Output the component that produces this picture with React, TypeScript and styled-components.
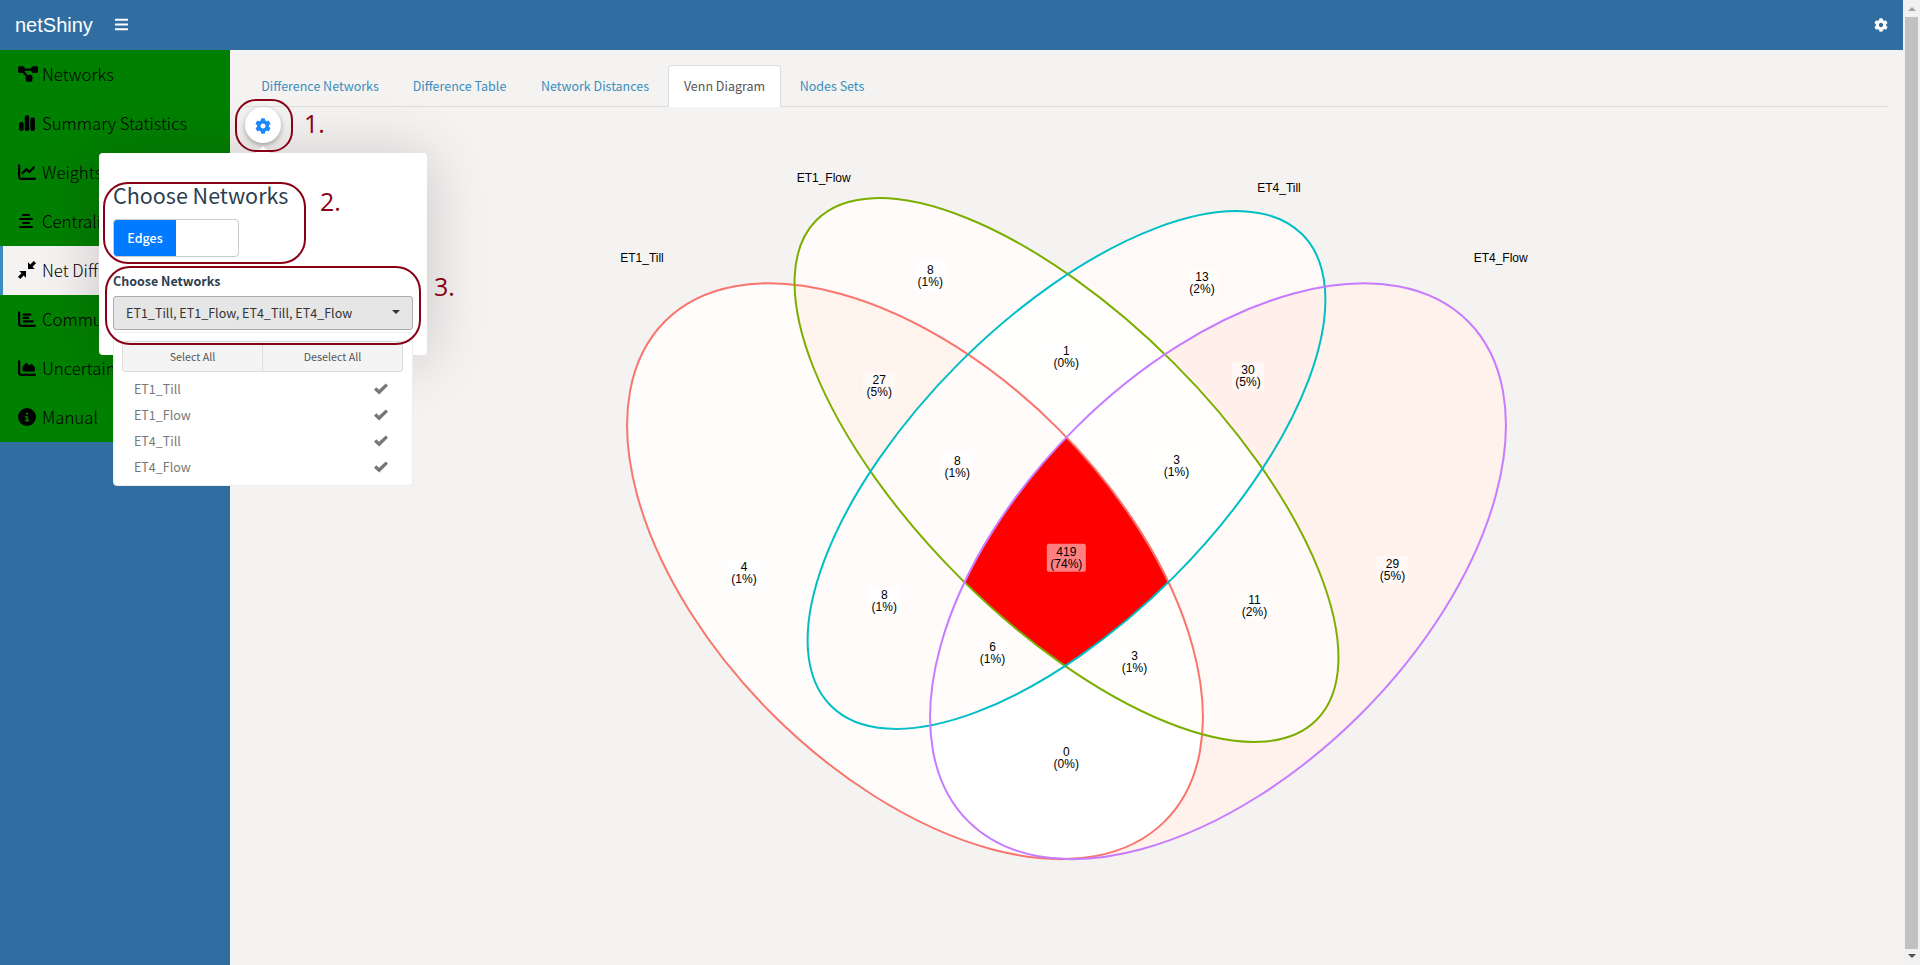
import React from 'react';
import styled, { createGlobalStyle } from 'styled-components';
import { FaBars, FaCog } from 'react-icons/fa';
import { FaChartSimple, FaChartLine, FaAlignCenter, FaChartBar, FaChartArea, FaCircleInfo, FaDiagramProject } from 'react-icons/fa6';

const SANS = '"Noto Sans CJK SC", "Noto Sans", sans-serif';

const GlobalStyle = createGlobalStyle`
  * { box-sizing: border-box; }
  html, body { margin: 0; height: 100%; overflow: hidden; }
  body { font-family: ${SANS}; font-size: 12.5px; color: #333; background: #f4f3f1; }
  ul, h3 { margin: 0; padding: 0; list-style: none; font-weight: normal; }
`;

const Window = styled.div`
  display: flex;
  width: 1920px;
  height: 965px;
  overflow: hidden;
`;
const Page = styled.div`
  position: relative;
  display: flex;
  flex-direction: column;
  width: 1903px;
`;
const Header = styled.header`
  display: flex;
  align-items: center;
  height: 50px;
  padding: 0 15px;
  background: #306ea1;
  color: #fff;
`;
const Brand = styled.span`
  width: 98.5px;
  font: 20px/50px "Liberation Sans", Arial, sans-serif;
`;
const MenuToggle = styled(FaBars)`
  margin-bottom: 1px;
  font-size: 15px;
`;
const SettingsIcon = styled(FaCog)`
  margin-left: auto;
  font-size: 14px;
`;
const Body = styled.div`
  display: flex;
  flex: 1;
`;
const Sidebar = styled.nav`
  width: 230px;
  background: #306ea1;
`;
const SideItem = styled.li<{ $active?: boolean }>`
  display: flex;
  align-items: center;
  height: 49px;
  padding: 0 0 2px 15px;
  border-left: 3px solid ${p => (p.$active ? '#3c8dbc' : 'green')};
  background: ${p => (p.$active ? '#f4f3f1' : 'green')};
  color: #000;
  font-size: 16.8px;
  font-weight: 300;
  white-space: nowrap;
`;
const IconSlot = styled.span`
  display: flex;
  width: 24px;
  font-size: 18px;
`;

const Content = styled.main`
  flex: 1;
  padding: 15px;
`;
const Tabs = styled.ul`
  display: flex;
  gap: 2px;
  height: 42px;
  border-bottom: 1px solid #ddd;
`;
const Tab = styled.li<{ $w: number; $active?: boolean }>`
  display: flex;
  align-items: center;
  justify-content: center;
  width: ${p => p.$w}px;
  height: 42px;
  padding-bottom: 2px;
  border: 1px solid ${p => (p.$active ? '#ddd' : 'transparent')};
  border-bottom: 0;
  border-radius: 4px 4px 0 0;
  background: ${p => (p.$active ? '#fff' : 'transparent')};
  color: ${p => (p.$active ? '#555' : '#3c8dbc')};
  white-space: nowrap;
`;
const Plot = styled.svg`
  display: block;
  width: 1642px;
  height: 790px;
  font-family: "Liberation Sans", Arial, sans-serif;
  font-size: 12px;
`;

const Scrollbar = styled.div`
  display: flex;
  flex-direction: column;
  justify-content: space-between;
  align-items: center;
  width: 17px;
  padding: 7px 0;
  background: #f1f1f1;
`;
const Thumb = styled.div`
  width: 13px;
  height: 932px;
  background: #c1c1c1;
`;
const ScrollArrow = styled.div<{ $down?: boolean }>`
  border: 4px solid transparent;
  border-top: ${p => (p.$down ? '4px solid #505050' : '0')};
  border-bottom: ${p => (p.$down ? '0' : '4px solid #a3a3a3')};
`;

const GearButton = styled.button`
  position: absolute;
  left: 245px;
  top: 107px;
  display: flex;
  align-items: center;
  justify-content: center;
  width: 36px;
  height: 36px;
  padding: 2px 0 0;
  border: 0;
  border-radius: 50%;
  background: #fff;
  box-shadow: 0 2px 5px rgba(0, 0, 0, 0.3);
  color: #1d89ff;
  font-size: 16px;
`;
const Popup = styled.section`
  position: absolute;
  left: 99px;
  top: 153px;
  width: 328px;
  height: 202px;
  padding: 26px 14px 0;
  border-radius: 4px;
  background: #fff;
  box-shadow: 0 4px 60px rgba(40, 0, 30, 0.2);
  color: #2c3e50;
`;
const PopupPointer = styled.div`
  position: absolute;
  left: 157px;
  top: -7px;
  border: 7px solid transparent;
  border-top: 0;
  border-bottom-color: #fff;
`;
const PopupTitle = styled.h3`
  height: 40px;
  font-size: 21.5px;
  line-height: 32px;
  white-space: nowrap;
`;
const Switch = styled.div`
  display: flex;
  width: 126px;
  height: 38px;
  border: 1px solid #ccc;
  border-radius: 4px;
  overflow: hidden;
`;
const SwitchOn = styled.span`
  width: 62px;
  background: #007bff;
  color: #fff;
  font-weight: 500;
  line-height: 35px;
  text-align: center;
`;
const FieldLabel = styled.label`
  display: block;
  height: 39px;
  padding-top: 14px;
  line-height: 20px;
  font-weight: 700;
`;
const Picker = styled.button`
  display: flex;
  align-items: center;
  justify-content: space-between;
  width: 300px;
  height: 34px;
  padding: 0 12px 2px;
  border: 1px solid #adadad;
  border-radius: 3px;
  background: #e6e6e6;
  color: #333;
  font: 12.55px ${SANS};
`;
const Caret = styled.span`
  border: 4px solid transparent;
  border-top-color: #333;
  border-bottom: 0;
`;
const Options = styled.div`
  position: absolute;
  left: 14px;
  top: 179px;
  width: 300px;
  height: 154px;
  padding: 8px 9px 0 8px;
  border: 1px solid #eee;
  border-radius: 4px;
  background: #fff;
  color: #777;
`;
const ActionGroup = styled.div`
  display: flex;
  height: 31px;
  margin-bottom: 4px;
  border: 1px solid #ddd;
  border-radius: 3px;
  background: #f4f4f4;
`;
const Action = styled.span`
  flex: 1;
  color: #555;
  font-size: 10.7px;
  line-height: 30px;
  text-align: center;
  & + & { border-left: 1px solid #ddd; }
`;
const Option = styled.div`
  display: flex;
  align-items: center;
  justify-content: space-between;
  height: 26px;
  padding: 0 15px 1px 12px;
`;

const Callout = styled.div<{ $x: number; $y: number; $w: number; $h: number; $r: number }>`
  position: absolute;
  left: ${p => p.$x}px;
  top: ${p => p.$y}px;
  width: ${p => p.$w}px;
  height: ${p => p.$h}px;
  border: 2px solid #880015;
  border-radius: ${p => p.$r}px;
`;
const Step = styled.span<{ $x: number; $y: number }>`
  position: absolute;
  left: ${p => p.$x}px;
  top: ${p => p.$y}px;
  color: #880015;
  font: 25px/30px "Open Sans", sans-serif;
`;

const CompressIcon = () => (
  <svg width="18" height="18" viewBox="0 0 18 18" fill="currentColor">
    <path d="M10 1.2V8h6.8l-2.3-2.3L18 2.3 15.7 0l-3.4 3.5zM1.2 10H8v6.8l-2.3-2.3L2.3 18 0 15.7l3.5-3.4z" />
  </svg>
);

const menu: { label: string; icon: React.ReactNode; active?: boolean }[] = [
  { label: 'Networks', icon: <FaDiagramProject size={20} /> },
  { label: 'Summary Statistics', icon: <FaChartSimple /> },
  { label: 'Weights', icon: <FaChartLine /> },
  { label: 'Centrality', icon: <FaAlignCenter size={16} /> },
  { label: 'Net Diffs', icon: <CompressIcon />, active: true },
  { label: 'Communities', icon: <FaChartBar /> },
  { label: 'Uncertainty', icon: <FaChartArea /> },
  { label: 'Manual', icon: <FaCircleInfo /> },
];

const tabs = [
  { label: 'Difference Networks', w: 150 },
  { label: 'Difference Table', w: 125 },
  { label: 'Network Distances', w: 142 },
  { label: 'Venn Diagram', w: 113, active: true },
  { label: 'Nodes Sets', w: 98 },
];

type SetKey = 'R' | 'G' | 'T' | 'P';
const sets: Record<SetKey, { cx: number; cy: number; rx: number; ry: number; rot: number; stroke: string }> = {
  R: { cx: 915, cy: 571.2, rx: 353.5, ry: 202, rot: 45, stroke: '#f8766d' },
  G: { cx: 1066.5, cy: 470, rx: 353.5, ry: 151.5, rot: 45, stroke: '#7cae00' },
  T: { cx: 1066.5, cy: 470, rx: 333.3, ry: 151.5, rot: -45, stroke: '#00bfc4' },
  P: { cx: 1218, cy: 571.2, rx: 353.5, ry: 202, rot: -45, stroke: '#c77cff' },
};
const keys: SetKey[] = ['R', 'G', 'T', 'P'];

const regions = [
  { id: 'R', n: 4, pct: 1, x: 744, y: 573, fill: '#fffdfc' },
  { id: 'G', n: 8, pct: 1, x: 930.3, y: 276, fill: '#fffbfa' },
  { id: 'T', n: 13, pct: 2, x: 1202, y: 283, fill: '#fffaf7' },
  { id: 'P', n: 29, pct: 5, x: 1392.5, y: 569.7, fill: '#fff1ec' },
  { id: 'RG', n: 27, pct: 5, x: 879.3, y: 386, fill: '#fff3ed' },
  { id: 'RT', n: 8, pct: 1, x: 884.3, y: 600.5, fill: '#fffbfa' },
  { id: 'RP', n: 0, pct: 0, x: 1066.3, y: 758, fill: '#ffffff' },
  { id: 'GT', n: 1, pct: 0, x: 1066.3, y: 357, fill: '#fffffe' },
  { id: 'GP', n: 11, pct: 2, x: 1254.5, y: 605.7, fill: '#fffaf8' },
  { id: 'TP', n: 30, pct: 5, x: 1248, y: 376, fill: '#fff0eb' },
  { id: 'RGT', n: 8, pct: 1, x: 957.3, y: 466.5, fill: '#fffbfa' },
  { id: 'RGP', n: 3, pct: 1, x: 1134.5, y: 661.7, fill: '#fffefd' },
  { id: 'RTP', n: 6, pct: 1, x: 992.5, y: 653, fill: '#fffcfb' },
  { id: 'GTP', n: 3, pct: 1, x: 1176.5, y: 466, fill: '#fffefd' },
  { id: 'RGTP', n: 419, pct: 74, x: 1066.3, y: 557.7, fill: '#ff0000' },
];

const Ellipse = ({ k, ...rest }: { k: SetKey } & React.SVGProps<SVGEllipseElement>) => {
  const s = sets[k];
  return <ellipse cx={s.cx} cy={s.cy} rx={s.rx} ry={s.ry} transform={`rotate(${s.rot} ${s.cx} ${s.cy})`} {...rest} />;
};

const Region = ({ id, fill }: { id: string; fill: string }) => {
  const [first, ...others] = id.split('') as SetKey[];
  return others.reduce<React.ReactElement>(
    (inner, k) => <g clipPath={`url(#clip-${k})`}>{inner}</g>,
    <Ellipse k={first} fill={fill} />,
  );
};

const VennDiagram = () => (
  <Plot viewBox="245 107 1642 790">
    <defs>
      {keys.map(k => (
        <clipPath key={k} id={`clip-${k}`}><Ellipse k={k} /></clipPath>
      ))}
    </defs>
    {regions.map(r => <Region key={r.id} id={r.id} fill={r.fill} />)}
    {keys.map(k => <Ellipse key={k} k={k} fill="none" stroke={sets[k].stroke} strokeWidth={2} />)}
    <g textAnchor="middle">
      <text x="642" y="262">ET1_Till</text>
      <text x="823.7" y="182">ET1_Flow</text>
      <text x="1279" y="192">ET4_Till</text>
      <text x="1500.7" y="262">ET4_Flow</text>
      {regions.map(r => {
        const w = r.n > 99 ? 39 : 32;
        return (
          <g key={r.id}>
            <rect x={r.x - w / 2} y={r.y - 14} width={w} height={28} rx={2} fill="#fff" opacity={0.5} />
            <text x={r.x} y={r.y - 1.7}>{r.n}</text>
            <text x={r.x} y={r.y + 10.3}>({r.pct}%)</text>
          </g>
        );
      })}
    </g>
  </Plot>
);

const Check = () => (
  <svg width="14" height="12" viewBox="0 0 14 12" fill="#777">
    <path d="M0 6.8 2.3 4.3 5 6.7 11.8.5 14 2.7 5.2 11.5z" />
  </svg>
);

export default function App() {
  return (
    <Window>
      <GlobalStyle />
      <Page>
        <Header>
          <Brand>netShiny</Brand>
          <MenuToggle />
          <SettingsIcon />
        </Header>
        <Body>
          <Sidebar>
            <ul>
              {menu.map(m => (
                <SideItem key={m.label} $active={m.active}>
                  <IconSlot>{m.icon}</IconSlot>
                  {m.label}
                </SideItem>
              ))}
            </ul>
          </Sidebar>
          <Content>
            <Tabs>
              {tabs.map(t => <Tab key={t.label} $w={t.w} $active={t.active}>{t.label}</Tab>)}
            </Tabs>
            <VennDiagram />
          </Content>
        </Body>
        <Popup>
          <PopupPointer />
          <PopupTitle>Choose Networks</PopupTitle>
          <Switch><SwitchOn>Edges</SwitchOn></Switch>
          <FieldLabel>Choose Networks</FieldLabel>
          <Picker>ET1_Till, ET1_Flow, ET4_Till, ET4_Flow<Caret /></Picker>
          <Options>
            <ActionGroup><Action>Select All</Action><Action>Deselect All</Action></ActionGroup>
            {['ET1_Till', 'ET1_Flow', 'ET4_Till', 'ET4_Flow'].map(o => (
              <Option key={o}>{o}<Check /></Option>
            ))}
          </Options>
        </Popup>
        <GearButton><FaCog /></GearButton>
        <Callout $x={235} $y={99} $w={58} $h={53} $r={21} />
        <Callout $x={103} $y={182} $w={203} $h={82} $r={25} />
        <Callout $x={105} $y={266} $w={316} $h={79} $r={25} />
        <Step $x={304} $y={108}>1.</Step>
        <Step $x={320} $y={186}>2.</Step>
        <Step $x={434} $y={271}>3.</Step>
      </Page>
      <Scrollbar>
        <ScrollArrow />
        <Thumb />
        <ScrollArrow $down />
      </Scrollbar>
    </Window>
  );
}
